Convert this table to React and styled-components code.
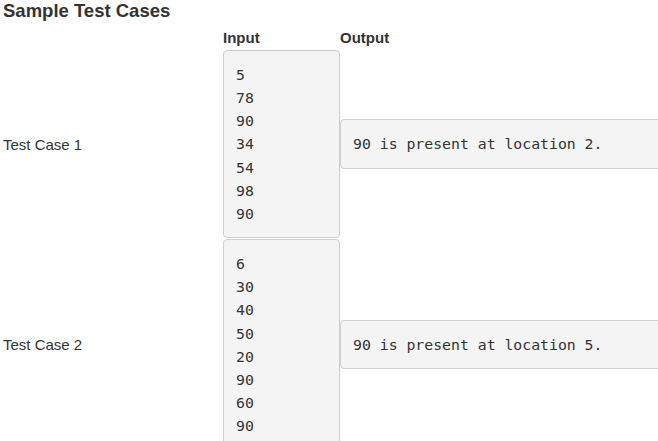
import React from "react";
import styled, { createGlobalStyle } from "styled-components";

const GlobalStyle = createGlobalStyle`
  body {
    margin: 0;
    overflow: hidden;
    background: #fff;
    color: #333;
    font-family: "Liberation Sans", Arial, sans-serif;
  }
`;

const Page = styled.div`
  padding-left: 3px;
  height: 441px;
  overflow: hidden;
`;

const Title = styled.h3`
  margin: 0;
  font-size: 18.5px;
  line-height: 22px;
  font-weight: bold;
`;

const Table = styled.div`
  display: grid;
  grid-template-columns: 220px 117px 420px;
  row-gap: 1px;
  margin-top: 6px;
`;

const HeadCell = styled.div`
  font-size: 15px;
  font-weight: bold;
  line-height: 20px;
  margin-bottom: 1px;
`;

const Label = styled.div`
  display: flex;
  align-items: center;
  font-size: 15px;
`;

const Cell = styled.div`
  display: flex;
  align-items: center;
`;

const Pre = styled.pre`
  margin: 0;
  width: 100%;
  box-sizing: border-box;
  padding: 12px;
  background: #f4f4f4;
  border: 1px solid #cfcfcf;
  border-radius: 4px;
  font-family: "DejaVu Sans Mono", monospace;
  font-size: 14.8px;
  line-height: 23.15px;
  color: #333;
  white-space: pre;
`;

const cases = [
  {
    name: "Test Case 1",
    input: ["5", "78", "90", "34", "54", "98", "90"],
    output: "90 is present at location 2.",
  },
  {
    name: "Test Case 2",
    input: ["6", "30", "40", "50", "20", "90", "60", "90"],
    output: "90 is present at location 5.",
  },
];

const App = () => {
  return (
    <Page>
      <GlobalStyle />
      <Title>Sample Test Cases</Title>
      <Table>
        <HeadCell />
        <HeadCell>Input</HeadCell>
        <HeadCell>Output</HeadCell>
        {cases.map((c) => (
          <React.Fragment key={c.name}>
            <Label>{c.name}</Label>
            <Cell>
              <Pre>{c.input.join("\n")}</Pre>
            </Cell>
            <Cell>
              <Pre>{c.output}</Pre>
            </Cell>
          </React.Fragment>
        ))}
      </Table>
    </Page>
  );
};

export default App;
